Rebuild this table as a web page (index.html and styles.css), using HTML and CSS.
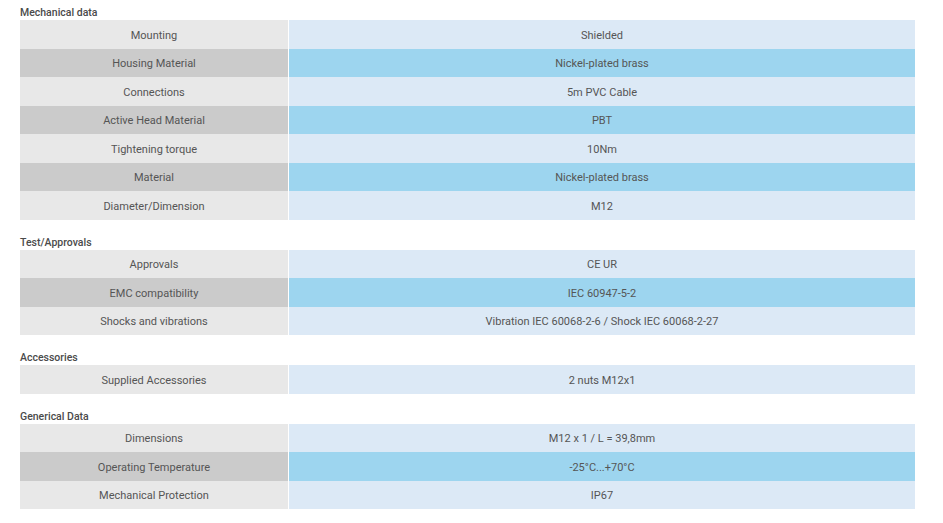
FILE: index.html
```html
<!DOCTYPE html>
<html>
<head>
<meta charset="utf-8">
<link rel="stylesheet" href="styles.css">
</head>
<body>
<section class="group">
  <h2 class="group-title">Mechanical data</h2>
  <div class="table">
    <div class="row"><div class="key">Mounting</div><div class="val">Shielded</div></div>
    <div class="row alt"><div class="key">Housing Material</div><div class="val">Nickel-plated brass</div></div>
    <div class="row"><div class="key">Connections</div><div class="val">5m PVC Cable</div></div>
    <div class="row alt"><div class="key">Active Head Material</div><div class="val">PBT</div></div>
    <div class="row"><div class="key">Tightening torque</div><div class="val">10Nm</div></div>
    <div class="row alt"><div class="key">Material</div><div class="val">Nickel-plated brass</div></div>
    <div class="row"><div class="key">Diameter/Dimension</div><div class="val">M12</div></div>
  </div>
</section>
<section class="group">
  <h2 class="group-title">Test/Approvals</h2>
  <div class="table">
    <div class="row"><div class="key">Approvals</div><div class="val">CE UR</div></div>
    <div class="row alt"><div class="key">EMC compatibility</div><div class="val">IEC 60947-5-2</div></div>
    <div class="row"><div class="key">Shocks and vibrations</div><div class="val">Vibration IEC 60068-2-6 / Shock IEC 60068-2-27</div></div>
  </div>
</section>
<section class="group">
  <h2 class="group-title">Accessories</h2>
  <div class="table">
    <div class="row"><div class="key">Supplied Accessories</div><div class="val">2 nuts M12x1</div></div>
  </div>
</section>
<section class="group">
  <h2 class="group-title">Generical Data</h2>
  <div class="table">
    <div class="row"><div class="key">Dimensions</div><div class="val">M12 x 1 / L = 39,8mm</div></div>
    <div class="row alt"><div class="key">Operating Temperature</div><div class="val">-25°C...+70°C</div></div>
    <div class="row"><div class="key">Mechanical Protection</div><div class="val">IP67</div></div>
  </div>
</section>
</body>
</html>
```
FILE: styles.css
```css
html, body {
  margin: 0;
  padding: 0;
  background: #ffffff;
}
body {
  padding: 5px 28px 0 20px;
  font-family: Roboto, "Liberation Sans", sans-serif;
  font-size: 11px;
  color: #555555;
}
.group {
  margin-bottom: 15px;
}
.group-title {
  margin: 0;
  font-size: 10.5px;
  line-height: 15px;
  font-weight: 500;
  color: #4a4a4a;
  height: 15px;
}
.table {
  display: flex;
  flex-direction: column;
  width: 895px;
}
.row {
  display: grid;
  grid-template-columns: 268px 626px;
  column-gap: 1px;
  height: 28.5px;
}
.key, .val {
  display: flex;
  align-items: center;
  justify-content: center;
  text-align: center;
  padding-top: 2px;
  box-sizing: border-box;
}
.key { background: #e8e8e8; }
.val { background: #dce9f6; }
.alt .key { background: #cbcbcb; }
.alt .val { background: #9dd5ef; }
```
